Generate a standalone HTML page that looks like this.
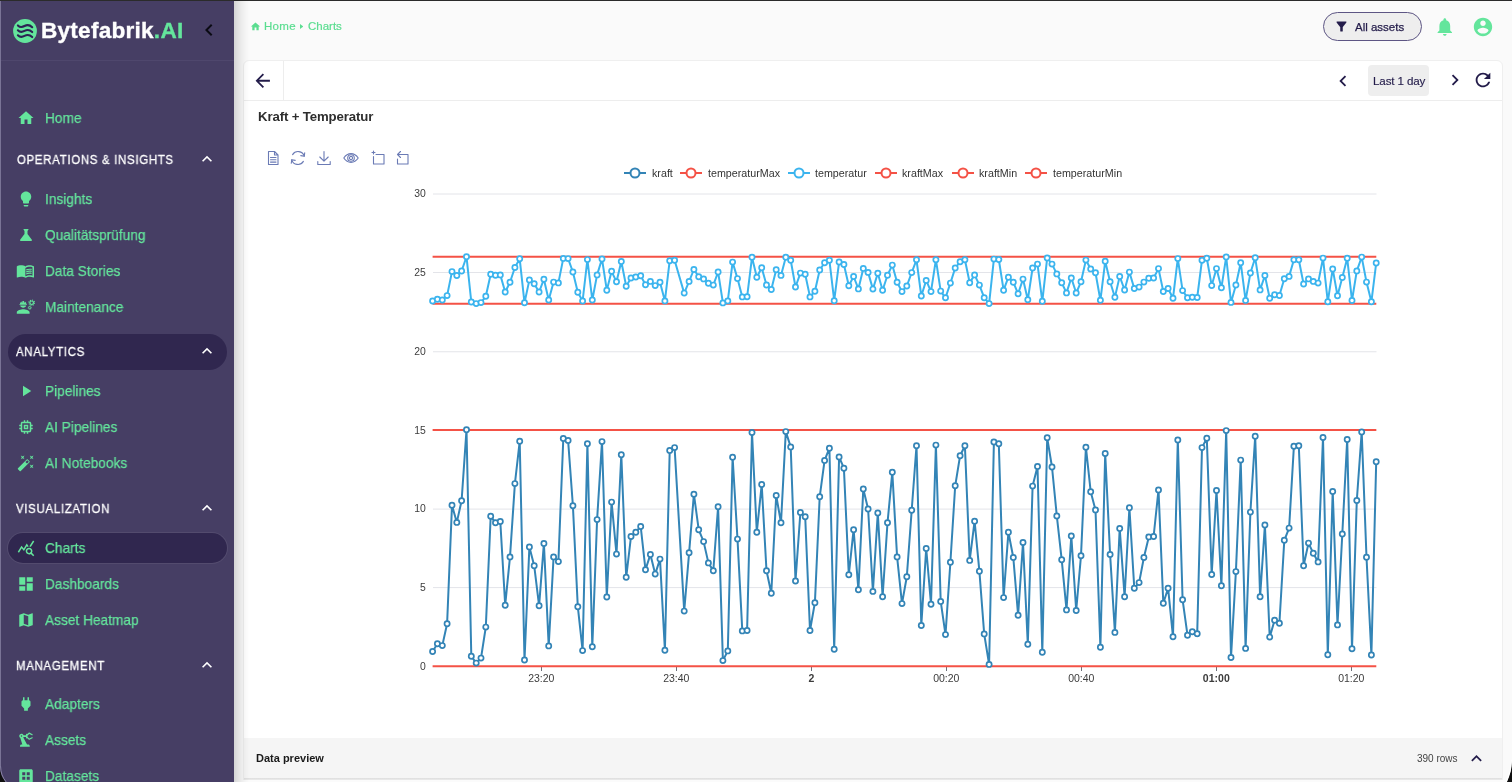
<!DOCTYPE html>
<html lang="en"><head><meta charset="utf-8"><title>Bytefabrik.AI - Charts</title>
<style>
*{box-sizing:border-box;margin:0;padding:0}
html,body{width:1512px;height:782px;overflow:hidden;background:#fafafa;font-family:"Liberation Sans",sans-serif;}
body{position:relative}
.abs{position:absolute}
.bc,#assets span,#last span,#title,#dp .t,#dp .r,.chart,.logo,.ni,.sec{will-change:transform}
svg{display:block}
/* sidebar */
#sb{position:absolute;left:0;top:0;width:234px;height:782px;background:#463e64;overflow:hidden}
#sbline{position:absolute;left:0;top:60px;width:234px;height:1px;background:#4f476d}
.logo{position:absolute;left:41.2px;top:14px;font-weight:bold;font-size:22.6px;line-height:34px;color:#fff;letter-spacing:0.23px;white-space:nowrap;-webkit-text-stroke:0.35px #fff}
.logo b{color:#64e59c;letter-spacing:0.3px;-webkit-text-stroke:0.35px #64e59c}
.ni{position:absolute;left:45.3px;font-size:15px;line-height:20px;color:#64e59c;white-space:nowrap;transform:scaleX(0.913);transform-origin:0 0;-webkit-text-stroke:0.25px #64e59c}
.ic{position:absolute;left:16.5px;width:18px;height:18px;fill:#64e59c}
.sec{position:absolute;left:16.6px;font-size:12.5px;line-height:18px;color:#fff;letter-spacing:0.78px;white-space:nowrap;transform:scaleX(0.913);transform-origin:0 0;-webkit-text-stroke:0.3px #fff}
.chev{position:absolute;left:197px;width:20px;height:20px;fill:#fff}
.pill{position:absolute;left:8px;width:219px;background:#30274f}
/* main */
#shadow{z-index:5;position:absolute;left:234px;top:0;width:15px;height:782px;background:linear-gradient(to right,rgba(0,0,0,.15),rgba(0,0,0,.095) 27%,rgba(0,0,0,.045) 58%,rgba(0,0,0,.014) 85%,rgba(0,0,0,0))}
#topline{position:absolute;left:0;top:0;width:1512px;height:1px;background:#2b2b2b}
.bc{position:absolute;top:18.3px;font-size:11.5px;line-height:16px;color:#5bdd90;white-space:nowrap;-webkit-text-stroke:0.2px #5bdd90}
#assets{position:absolute;left:1323px;top:12px;width:99px;height:29px;border:1px solid #5d5684;border-radius:15px;background:#eeeeee}
#assets span{position:absolute;left:31px;top:6.600px;font-size:11.5px;line-height:15px;color:#231c4a;white-space:nowrap;-webkit-text-stroke:0.25px #231c4a}
#panel{position:absolute;left:243px;top:60px;width:1260px;height:731px;background:#fff;border:1px solid #efefef;border-radius:6px 6px 0 0}
#tbline{position:absolute;left:244px;top:100px;width:1258px;height:1px;background:#ededed}
#vdiv{position:absolute;left:283px;top:61px;width:1px;height:39px;background:#ededed}
#last{position:absolute;left:1368px;top:65px;width:61px;height:31px;border-radius:4px;background:#eeeeee}
#last span{position:absolute;left:5.200px;top:8.400px;font-size:11.6px;line-height:15px;color:#231c4a;white-space:nowrap;letter-spacing:-0.12px;-webkit-text-stroke:0.15px #231c4a}
#title{position:absolute;left:258px;top:108.300px;font-size:13.2px;line-height:18px;font-weight:bold;color:#2e2e2e;white-space:nowrap;letter-spacing:-0.12px}
.chart{position:absolute;left:0;top:0}
.ax{font-family:"Liberation Sans",sans-serif;font-size:11px;fill:#3c3c3c}
.lg{font-family:"Liberation Sans",sans-serif;font-size:11px;fill:#333}
#dp{position:absolute;left:244px;top:738px;width:1258px;height:40px;background:#f5f5f5}
#dpl{position:absolute;left:244px;top:778px;width:1258px;height:2px;background:linear-gradient(#dddddd,#ececec)}
#below{position:absolute;left:234px;top:780px;width:1278px;height:2px;background:#fbfbfb}
#dp .t{position:absolute;left:12px;top:11.800px;font-size:11px;line-height:16px;font-weight:bold;color:#1a1a1a;white-space:nowrap}
#dp .r{position:absolute;left:1173.200px;top:13.700px;font-size:10px;line-height:14px;color:#444;white-space:nowrap}
.tool{position:absolute;top:149px;width:18px;height:18px;fill:none;stroke:#6b7bb5;stroke-width:1.1;stroke-linecap:round;stroke-linejoin:round}
.cornerL{position:absolute;left:0;top:762px;width:20px;height:20px;background:radial-gradient(circle at 100% 0,rgba(0,0,0,0) 19px,#8f8aa6 19.5px,#111 21px)}
.cornerR{position:absolute;left:1492px;top:762px;width:20px;height:20px;background:radial-gradient(circle at 0 0,rgba(0,0,0,0) 19px,#777 19.5px,#111 21px)}
</style></head><body>

<!-- ================= SIDEBAR ================= -->
<div id="sb">
  <svg class="abs" style="left:13.4px;top:18.7px" width="24" height="24" viewBox="0 0 24 24"><circle cx="12" cy="12" r="11.9" fill="#64e59c"/><g fill="none" stroke="#2c2252" stroke-width="2.1" stroke-linecap="round"><path d="M4.900 6.400C7.200 8.700 9.200 8.300 11.500 7S16.600 5.600 19.200 8.200"/><path d="M4.900 11.300C7.200 13.600 9.200 13.200 11.500 11.900S16.600 10.500 19.200 13.100"/><path d="M4.900 16.300C7.200 18.600 9.200 18.200 11.500 16.900S16.600 15.500 19.200 18.100"/></g></svg>
  <div class="logo">Bytefabrik<b>.AI</b></div>
  <svg class="abs" style="left:197px;top:18px" width="24" height="24" viewBox="0 0 24 24" fill="#0b0b14"><path d="M15.410 7.410L14 6l-6 6 6 6 1.410-1.410L10.830 12z"/></svg>
  <div id="sbline"></div>

  <svg class="ic" style="top:109px" viewBox="0 0 24 24"><path d="M10 20v-6h4v6h5v-8h3L12 3 2 12h3v8z"/></svg>
  <div class="ni" style="top:108px">Home</div>

  <div class="sec" style="top:150.6px">OPERATIONS &amp; INSIGHTS</div>
  <svg class="chev" style="top:149px" viewBox="0 0 24 24"><path d="M12 8l-6 6 1.410 1.410L12 10.830l4.590 4.580L18 14z"/></svg>

  <svg class="ic" style="top:190px" viewBox="0 0 24 24"><path d="M9 21c0 .55.45 1 1 1h4c.55 0 1-.45 1-1v-1H9v1zm3-19C8.140 2 5 5.140 5 9c0 2.380 1.190 4.470 3 5.740V17c0 .55.45 1 1 1h6c.55 0 1-.45 1-1v-2.260c1.810-1.270 3-3.360 3-5.740 0-3.860-3.140-7-7-7z"/></svg>
  <div class="ni" style="top:189px">Insights</div>
  <svg class="ic" style="top:226px" viewBox="0 0 24 24"><path d="M19.800 18.400L14 10.670V6.500l1.350-1.690c.26-.33.03-.81-.39-.81H9.040c-.42 0-.65.48-.39.81L10 6.500v4.170L4.200 18.400c-.49.66-.02 1.600.8 1.600h14c.82 0 1.290-.94.800-1.600z"/></svg>
  <div class="ni" style="top:225px">Qualitätsprüfung</div>
  <svg class="ic" style="top:262.100px;left:15.900px;width:18.800px;height:17.700px" viewBox="0 0 24 24" preserveAspectRatio="none"><path d="M21 5c-1.110-.35-2.330-.5-3.500-.5-1.950 0-4.050.4-5.500 1.500-1.450-1.100-3.550-1.500-5.500-1.500S2.450 4.900 1 6v14.650c0 .25.25.5.5.5.1 0 .15-.05.25-.05C3.100 20.450 5.050 20 6.500 20c1.950 0 4.050.4 5.500 1.500 1.350-.85 3.800-1.500 5.500-1.500 1.650 0 3.350.3 4.750 1.050.1.050.15.050.25.050.25 0 .5-.25.5-.5V6c-.6-.45-1.250-.75-2-1zm0 13.500c-1.100-.35-2.300-.5-3.500-.5-1.700 0-4.150.65-5.500 1.500V8c1.350-.85 3.800-1.500 5.500-1.500 1.200 0 2.400.15 3.500.5v11.500z"/><path d="M17.500 10.500c.88 0 1.730.09 2.500.26V9.240c-.79-.15-1.640-.24-2.500-.24-1.700 0-3.240.29-4.500.83v1.660c1.130-.64 2.700-.99 4.500-.99zM13 12.490v1.660c1.130-.64 2.700-.99 4.500-.99.88 0 1.730.09 2.500.26V11.900c-.79-.15-1.640-.24-2.500-.24-1.700 0-3.240.3-4.500.83zM17.500 14.330c-1.700 0-3.240.29-4.500.83v1.660c1.130-.64 2.700-.99 4.500-.99.88 0 1.730.09 2.500.26v-1.520c-.79-.16-1.640-.24-2.500-.24z"/></svg>
  <div class="ni" style="top:261px">Data Stories</div>
  <svg class="ic" style="top:297.700px;left:16.200px;width:19.200px;height:18px" viewBox="0 0 24 24" preserveAspectRatio="none"><path d="M9 15c-2.670 0-8 1.340-8 4v2h16v-2c0-2.660-5.330-4-8-4zM4.740 9h8.530c.27 0 .49-.22.49-.49v-.02c0-.27-.22-.49-.49-.49H13c0-1.480-.81-2.750-2-3.450v.95c0 .28-.22.5-.5.5s-.5-.22-.5-.5V4.140C9.680 4.060 9.350 4 9 4s-.68.060-1 .14V5.500c0 .28-.22.5-.5.5S7 5.780 7 5.500v-.95C5.810 5.250 5 6.520 5 8h-.26c-.27 0-.49.22-.49.49v.03c0 .26.22.48.49.48zM9 13c1.860 0 3.410-1.280 3.860-3H5.140c.45 1.720 2 3 3.860 3z"/><circle cx="19.600" cy="6.300" r="2.300" fill="none" stroke="#64e59c" stroke-width="1.500"/><circle cx="19.600" cy="6.300" r="3.550" fill="none" stroke="#64e59c" stroke-width="1.300" stroke-dasharray="1.394 1.394"/><circle cx="17.200" cy="12.900" r="1.450" fill="none" stroke="#64e59c" stroke-width="1.100"/><circle cx="17.200" cy="12.900" r="2.200" fill="none" stroke="#64e59c" stroke-width="0.800" stroke-dasharray="0.864 0.864"/></svg>
  <div class="ni" style="top:297px">Maintenance</div>

  <div class="pill" style="top:334px;height:36px;border-radius:18px"></div>
  <div class="sec" style="top:342.6px;left:16px">ANALYTICS</div>
  <svg class="chev" style="top:341px" viewBox="0 0 24 24"><path d="M12 8l-6 6 1.410 1.410L12 10.830l4.590 4.580L18 14z"/></svg>

  <svg class="ic" style="top:382px" viewBox="0 0 24 24"><path d="M8 5v14l11-7z"/></svg>
  <div class="ni" style="top:381px">Pipelines</div>
  <svg class="ic" style="top:418px" viewBox="0 0 24 24"><path d="M15 9H9v6h6V9zm-2 4h-2v-2h2v2zm8-2V9h-2V7c0-1.100-.9-2-2-2h-2V3h-2v2h-2V3H9v2H7c-1.100 0-2 .9-2 2v2H3v2h2v2H3v2h2v2c0 1.100.9 2 2 2h2v2h2v-2h2v2h2v-2h2c1.100 0 2-.9 2-2v-2h2v-2h-2v-2h2zm-4 6H7V7h10v10z"/></svg>
  <div class="ni" style="top:417px">AI Pipelines</div>
  <svg class="ic" style="top:454px" viewBox="0 0 24 24"><path d="M7.500 5.600L10 7 8.600 4.500 10 2 7.500 3.400 5 2l1.400 2.500L5 7zm12 9.800L17 14l1.400 2.500L17 19l2.500-1.400L22 19l-1.400-2.500L22 14zM22 2l-2.500 1.400L17 2l1.400 2.500L17 7l2.500-1.400L22 7l-1.400-2.500zm-7.630 5.290c-.39-.39-1.020-.39-1.410 0L1.290 18.960c-.39.39-.39 1.020 0 1.410l2.340 2.340c.39.39 1.020.39 1.410 0L16.700 11.050c.39-.39.39-1.020 0-1.410l-2.330-2.350zm-1.030 5.490l-2.120-2.120 2.440-2.440 2.120 2.120-2.440 2.440z"/></svg>
  <div class="ni" style="top:453px">AI Notebooks</div>

  <div class="sec" style="top:499.6px;left:16px">VISUALIZATION</div>
  <svg class="chev" style="top:498px" viewBox="0 0 24 24"><path d="M12 8l-6 6 1.410 1.410L12 10.830l4.590 4.580L18 14z"/></svg>

  <div class="pill" style="top:533px;height:30px;border-radius:15px;box-shadow:0 0 0 1px rgba(255,255,255,.07)"></div>
  <svg class="ic" style="top:539px" viewBox="0 0 24 24"><path d="M19.880 18.470c.44-.7.7-1.510.7-2.390 0-2.490-2.010-4.500-4.500-4.500s-4.500 2.010-4.500 4.500 2.010 4.500 4.490 4.500c.88 0 1.700-.26 2.390-.7L21.580 23 23 21.580l-3.120-3.110zm-3.800.11c-1.380 0-2.500-1.120-2.500-2.500s1.120-2.500 2.500-2.500 2.500 1.120 2.500 2.500-1.120 2.500-2.500 2.500zm-.36-8.500c-.74.02-1.450.18-2.100.45l-.55-.83-3.800 6.180-3.010-3.520-3.630 5.810L1 17l5-8 3 3.500L13 6l2.720 4.080zm2.590.5c-.64-.28-1.330-.45-2.050-.49L21.380 2 23 3.180l-4.690 7.400z"/></svg>
  <div class="ni" style="top:538px">Charts</div>
  <svg class="ic" style="top:575px" viewBox="0 0 24 24"><path d="M3 13h8V3H3v10zm0 8h8v-6H3v6zm10 0h8V11h-8v10zm0-18v6h8V3h-8z"/></svg>
  <div class="ni" style="top:574px">Dashboards</div>
  <svg class="ic" style="top:611px" viewBox="0 0 24 24"><path d="M20.500 3l-.16.03L15 5.100 9 3 3.360 4.900c-.21.07-.36.25-.36.48V20.500c0 .28.22.5.5.5l.16-.03L9 18.900l6 2.100 5.640-1.900c.21-.07.36-.25.36-.48V3.500c0-.28-.22-.5-.5-.5zM15 19l-6-2.110V5l6 2.110V19z"/></svg>
  <div class="ni" style="top:610px">Asset Heatmap</div>

  <div class="sec" style="top:656.6px;left:16px">MANAGEMENT</div>
  <svg class="chev" style="top:655px" viewBox="0 0 24 24"><path d="M12 8l-6 6 1.410 1.410L12 10.830l4.590 4.580L18 14z"/></svg>

  <svg class="ic" style="top:695px" viewBox="0 0 24 24"><path d="M16.010 7L16 3h-2v4h-4V3H8v4h-.01C7 6.990 6 7.990 6 8.990v5.490L9.500 18v3h5v-3l3.500-3.510v-5.500c0-1-1-2-1.990-1.990z"/></svg>
  <div class="ni" style="top:694px">Adapters</div>
  <svg class="ic" style="top:731px" viewBox="0 0 24 24"><path d="M19.930 8.350l-3.600 1.680L14 7.700V6.300l2.330-2.330 3.600 1.680c.38.18.82.01 1-.36.18-.38.01-.82-.36-1L16.650 2.100c-.38-.18-.83-.1-1.130.2l-1.740 1.740c-.18-.24-.46-.4-.78-.4-.55 0-1 .45-1 1v1H8.820C8.400 4.470 7.300 3.640 6 3.640c-1.660 0-3 1.340-3 3 0 1.100.6 2.050 1.480 2.580L7.080 18H6c-1.100 0-2 .9-2 2v1h13v-1c0-1.100-.9-2-2-2h-1.620L8.410 8.770c.17-.24.31-.49.41-.77H12v1c0 .55.45 1 1 1 .32 0 .6-.16.78-.4l1.740 1.740c.3.3.75.38 1.130.2l3.920-1.830c.38-.18.54-.62.36-1-.18-.37-.62-.54-1-.36zM6 7.640c-.55 0-1-.45-1-1s.45-1 1-1 1 .45 1 1-.45 1-1 1z"/></svg>
  <div class="ni" style="top:730px">Assets</div>
  <svg class="ic" style="top:767px" viewBox="0 0 24 24"><path d="M19 3H5c-1.100 0-2 .9-2 2v14c0 1.100.9 2 2 2h14c1.100 0 2-.9 2-2V5c0-1.100-.9-2-2-2zm-8 14H7v-4h4v4zm0-6H7V7h4v4zm6 6h-4v-4h4v4zm0-6h-4V7h4v4z"/></svg>
  <div class="ni" style="top:766px">Datasets</div>
</div>

<!-- ================= MAIN ================= -->
<div id="shadow"></div>

<svg class="abs" style="left:249.500px;top:20.600px" width="11" height="11" viewBox="0 0 24 24" fill="#5bdd90"><path d="M10 20v-6h4v6h5v-8h3L12 3 2 12h3v8z"/></svg>
<div class="bc" style="left:264.300px;letter-spacing:0.3px">Home</div>
<svg class="abs" style="left:300px;top:23.600px" width="3.200" height="5" viewBox="0 0 3.200 5" fill="#5bdd90"><path d="M0 0L3.200 2.500 0 5z"/></svg>
<div class="bc" style="left:307.600px">Charts</div>

<div id="assets"><svg class="abs" style="left:10px;top:6px" width="15" height="15" viewBox="0 0 24 24" fill="#231c4a"><path d="M4.250 5.610C6.270 8.200 10 13 10 13v6c0 .55.45 1 1 1h2c.55 0 1-.45 1-1v-6s3.720-4.800 5.740-7.390c.51-.66.04-1.610-.79-1.610H5.040c-.83 0-1.300.95-.79 1.610z"/></svg><span>All assets</span></div>
<svg class="abs" style="left:1434.300px;top:16.100px" width="21.600" height="21.600" viewBox="0 0 24 24" fill="#64e59c"><path d="M12 22c1.100 0 2-.9 2-2h-4c0 1.100.89 2 2 2zm6-6v-5c0-3.070-1.640-5.640-4.500-6.320V4c0-.83-.67-1.500-1.500-1.500s-1.500.67-1.500 1.500v.68C7.630 5.360 6 7.920 6 11v5l-2 2v1h16v-1l-2-2z"/></svg>
<svg class="abs" style="left:1472px;top:15.500px" width="22" height="22" viewBox="0 0 24 24" fill="#64e59c"><path d="M12 2C6.480 2 2 6.480 2 12s4.480 10 10 10 10-4.480 10-10S17.520 2 12 2zm0 3c1.660 0 3 1.340 3 3s-1.340 3-3 3-3-1.340-3-3 1.340-3 3-3zm0 14.200c-2.500 0-4.710-1.280-6-3.220.03-1.990 4-3.080 6-3.080 1.990 0 5.970 1.090 6 3.080-1.290 1.940-3.500 3.220-6 3.220z"/></svg>

<div id="panel"></div>
<div id="tbline"></div>
<div id="vdiv"></div>
<svg class="abs" style="left:252.200px;top:69.900px" width="21.500" height="21.500" viewBox="0 0 24 24" fill="#231c4a"><path d="M20 11H7.830l5.590-5.590L12 4l-8 8 8 8 1.410-1.410L7.830 13H20v-2z"/></svg>
<svg class="abs" style="left:1332.300px;top:69.500px" width="22" height="22" viewBox="0 0 24 24" fill="#231c4a"><path d="M15.410 7.410L14 6l-6 6 6 6 1.410-1.410L10.830 12z"/></svg>
<div id="last"><span>Last 1 day</span></div>
<svg class="abs" style="left:1443.600px;top:69.400px" width="22" height="22" viewBox="0 0 24 24" fill="#231c4a"><path d="M10 6L8.590 7.410 13.170 12l-4.580 4.590L10 18l6-6z"/></svg>
<svg class="abs" style="left:1472.400px;top:69.400px" width="22" height="22" viewBox="0 0 24 24" fill="#231c4a"><path d="M17.650 6.350C16.200 4.900 14.210 4 12 4c-4.420 0-7.990 3.580-7.990 8s3.570 8 7.990 8c3.730 0 6.840-2.550 7.730-6h-2.080c-.82 2.330-3.040 4-5.650 4-3.310 0-6-2.690-6-6s2.690-6 6-6c1.660 0 3.140.69 4.220 1.780L13 11h7V4l-2.350 2.350z"/></svg>

<div id="title">Kraft + Temperatur</div>

<!-- echarts toolbox -->
<svg class="tool" style="left:264px" viewBox="0 0 18 18"><path d="M4.500 2.500h6l3.500 3.500v9.500h-9.500zM10.500 2.500v3.500h3.500M6.500 8.500h5.500M6.500 10.800h5.500M6.500 13.100h5.500"/></svg>
<svg class="tool" style="left:289px" viewBox="0 0 18 18"><path d="M15.200 7.200A6.400 6.400 0 0 0 3.600 5.600M2.800 10.800a6.400 6.400 0 0 0 11.600 1.600"/><path d="M15.700 3.700l-.4 3.600-3.500-.7M2.300 14.300l.4-3.600 3.500.7"/></svg>
<svg class="tool" style="left:315px" viewBox="0 0 18 18"><path d="M9 2.500v9.500M4.800 8l4.200 4.200L13.200 8M2.800 12.500v3h12.400v-3"/></svg>
<svg class="tool" style="left:342px" viewBox="0 0 18 18"><path d="M1.800 9c2-3 4.400-4.400 7.200-4.400s5.200 1.400 7.200 4.400c-2 3-4.400 4.400-7.200 4.400S3.800 12 1.800 9z"/><circle cx="9" cy="9" r="3.300"/><circle cx="9" cy="9" r="1.600"/></svg>
<svg class="tool" style="left:369px" viewBox="0 0 18 18"><path d="M4.500 2v3M3 3.500h3M4.500 7.500v7.500h10.500v-9.500h-8"/></svg>
<svg class="tool" style="left:393.400px" viewBox="0 0 18 18"><path d="M7.500 2.500L4.500 5.500l3 3M4.500 5.500h10.500v9.500h-10.500v-5"/></svg>

<svg class="chart" width="1512" height="782" viewBox="0 0 1512 782">
<line x1="433" x2="1376.5" y1="194.0" y2="194.0" stroke="#e3e4e9" stroke-width="1"/>
<line x1="433" x2="1376.5" y1="272.5" y2="272.5" stroke="#e3e4e9" stroke-width="1"/>
<line x1="433" x2="1376.5" y1="351.75" y2="351.75" stroke="#e3e4e9" stroke-width="1"/>
<line x1="433" x2="1376.5" y1="430.2" y2="430.2" stroke="#e3e4e9" stroke-width="1"/>
<line x1="433" x2="1376.5" y1="509.1" y2="509.1" stroke="#e3e4e9" stroke-width="1"/>
<line x1="433" x2="1376.5" y1="587.6" y2="587.6" stroke="#e3e4e9" stroke-width="1"/>
<text transform="translate(425.7,197.0) scale(0.945,1)" text-anchor="end" class="ax">30</text>
<text transform="translate(425.7,275.5) scale(0.945,1)" text-anchor="end" class="ax">25</text>
<text transform="translate(425.7,354.8) scale(0.945,1)" text-anchor="end" class="ax">20</text>
<text transform="translate(425.7,433.5) scale(0.945,1)" text-anchor="end" class="ax">15</text>
<text transform="translate(425.7,512.4) scale(0.945,1)" text-anchor="end" class="ax">10</text>
<text transform="translate(425.7,590.6) scale(0.945,1)" text-anchor="end" class="ax">5</text>
<text transform="translate(425.7,670.0) scale(0.945,1)" text-anchor="end" class="ax">0</text>
<line x1="541.5" x2="541.5" y1="666" y2="671" stroke="#6e7079" stroke-width="1"/>
<text transform="translate(541.3,682.1) scale(0.955,1)" text-anchor="middle" class="ax">23:20</text>
<line x1="676.5" x2="676.5" y1="666" y2="671" stroke="#6e7079" stroke-width="1"/>
<text transform="translate(676.3,682.1) scale(0.955,1)" text-anchor="middle" class="ax">23:40</text>
<line x1="811.5" x2="811.5" y1="666" y2="671" stroke="#6e7079" stroke-width="1"/>
<text transform="translate(811.3,682.1) scale(0.955,1)" text-anchor="middle" class="ax" font-weight="bold">2</text>
<line x1="946.5" x2="946.5" y1="666" y2="671" stroke="#6e7079" stroke-width="1"/>
<text transform="translate(946.3,682.1) scale(0.955,1)" text-anchor="middle" class="ax">00:20</text>
<line x1="1081.5" x2="1081.5" y1="666" y2="671" stroke="#6e7079" stroke-width="1"/>
<text transform="translate(1081.3,682.1) scale(0.955,1)" text-anchor="middle" class="ax">00:40</text>
<line x1="1216.5" x2="1216.5" y1="666" y2="671" stroke="#6e7079" stroke-width="1"/>
<text transform="translate(1216.3,682.1) scale(0.955,1)" text-anchor="middle" class="ax" font-weight="bold">01:00</text>
<line x1="1351.5" x2="1351.5" y1="666" y2="671" stroke="#6e7079" stroke-width="1"/>
<text transform="translate(1351.3,682.1) scale(0.955,1)" text-anchor="middle" class="ax">01:20</text>
<line x1="432.6" x2="1376.3" y1="256.8" y2="256.8" stroke="#f45246" stroke-width="2"/>
<line x1="432.6" x2="1376.3" y1="303.7" y2="303.7" stroke="#f45246" stroke-width="2"/>
<line x1="432.6" x2="1376.3" y1="429.9" y2="429.9" stroke="#f45246" stroke-width="2"/>
<line x1="432.6" x2="1376.3" y1="666.2" y2="666.2" stroke="#f45246" stroke-width="2"/>
<polyline points="432.6,301.0 437.4,299.3 442.3,300.0 447.1,295.6 452.0,271.6 456.8,275.5 461.6,271.0 466.5,256.7 471.3,302.0 476.2,303.6 481.0,302.6 485.8,296.3 490.7,274.2 495.5,275.3 500.3,274.9 505.2,292.0 510.0,282.2 514.9,267.5 519.7,258.8 524.5,302.8 529.4,279.9 534.2,283.7 539.1,292.0 543.9,279.2 548.7,300.0 553.6,282.1 558.4,282.9 563.3,258.4 568.1,258.6 572.9,272.0 577.8,292.2 582.6,301.0 587.4,259.6 592.3,300.0 597.1,274.9 602.0,258.9 606.8,290.2 611.6,271.3 616.5,281.8 621.3,261.5 626.2,286.2 631.0,278.0 635.8,277.0 640.7,275.8 645.5,284.8 650.4,281.4 655.2,285.6 660.0,282.3 664.9,300.9 669.7,260.7 674.6,260.2 684.2,293.1 689.1,281.4 693.9,269.5 698.7,276.7 703.6,278.9 708.4,283.3 713.3,285.1 718.1,272.0 722.9,302.9 727.8,300.9 732.6,262.1 737.5,278.6 742.3,296.9 747.1,296.8 752.0,257.3 756.8,277.3 761.7,267.7 766.5,285.0 771.3,289.5 776.2,269.8 781.0,275.4 785.8,257.2 790.7,260.2 795.5,287.0 800.4,273.1 805.2,274.2 810.0,296.9 814.9,291.2 819.7,270.0 824.6,262.7 829.4,260.3 834.2,300.7 839.1,262.0 843.9,264.5 848.8,285.8 853.6,276.5 858.4,288.9 863.3,268.4 868.1,272.4 872.9,289.1 877.8,273.3 882.6,290.2 887.5,275.3 892.3,265.1 897.1,282.2 902.0,291.6 906.8,286.0 911.7,272.6 916.5,259.8 921.3,296.0 926.2,280.4 931.0,291.6 935.9,259.7 940.7,291.1 945.5,297.8 950.4,283.1 955.2,268.0 960.1,261.8 964.9,259.8 969.7,282.7 974.6,274.9 979.4,285.1 984.2,297.7 989.1,303.6 993.9,259.1 998.8,259.5 1003.6,290.2 1008.4,277.2 1013.3,282.2 1018.1,293.8 1023.0,279.1 1027.8,299.8 1032.6,268.0 1037.5,264.1 1042.3,301.3 1047.2,257.9 1052.0,264.1 1056.8,273.9 1061.7,282.7 1066.5,292.9 1071.3,277.9 1076.2,293.0 1081.0,281.8 1085.9,260.1 1090.7,268.9 1095.5,272.8 1100.4,300.3 1105.2,261.3 1110.1,281.8 1114.9,297.3 1119.7,276.4 1124.6,290.0 1129.4,272.1 1134.3,288.5 1139.1,287.1 1143.9,282.1 1148.8,278.2 1153.6,278.0 1158.5,268.6 1163.3,291.5 1168.1,288.5 1173.0,298.2 1177.8,258.6 1182.6,290.6 1187.5,297.8 1192.3,297.3 1197.2,297.5 1202.0,260.2 1206.8,258.2 1211.7,285.6 1216.5,268.6 1221.4,287.8 1226.2,256.9 1231.0,302.4 1235.9,285.0 1240.7,262.7 1245.6,300.4 1250.4,273.0 1255.2,257.8 1260.1,289.9 1264.9,275.5 1269.7,298.2 1274.6,294.8 1279.4,295.5 1284.3,278.7 1289.1,276.4 1293.9,259.8 1298.8,259.8 1303.6,284.0 1308.5,278.9 1313.3,281.4 1318.1,283.1 1323.0,258.1 1327.8,301.8 1332.7,268.9 1337.5,295.8 1342.3,277.5 1347.2,258.3 1352.0,300.5 1356.8,270.9 1361.7,257.1 1366.5,282.1 1371.4,301.8 1376.2,263.0" fill="none" stroke="#3bb4ee" stroke-width="2" stroke-linejoin="bevel"/>
<g fill="#fff" stroke="#3bb4ee" stroke-width="1.7"><circle cx="432.6" cy="301.0" r="2.6"/><circle cx="437.4" cy="299.3" r="2.6"/><circle cx="442.3" cy="300.0" r="2.6"/><circle cx="447.1" cy="295.6" r="2.6"/><circle cx="452.0" cy="271.6" r="2.6"/><circle cx="456.8" cy="275.5" r="2.6"/><circle cx="461.6" cy="271.0" r="2.6"/><circle cx="466.5" cy="256.7" r="2.6"/><circle cx="471.3" cy="302.0" r="2.6"/><circle cx="476.2" cy="303.6" r="2.6"/><circle cx="481.0" cy="302.6" r="2.6"/><circle cx="485.8" cy="296.3" r="2.6"/><circle cx="490.7" cy="274.2" r="2.6"/><circle cx="495.5" cy="275.3" r="2.6"/><circle cx="500.3" cy="274.9" r="2.6"/><circle cx="505.2" cy="292.0" r="2.6"/><circle cx="510.0" cy="282.2" r="2.6"/><circle cx="514.9" cy="267.5" r="2.6"/><circle cx="519.7" cy="258.8" r="2.6"/><circle cx="524.5" cy="302.8" r="2.6"/><circle cx="529.4" cy="279.9" r="2.6"/><circle cx="534.2" cy="283.7" r="2.6"/><circle cx="539.1" cy="292.0" r="2.6"/><circle cx="543.9" cy="279.2" r="2.6"/><circle cx="548.7" cy="300.0" r="2.6"/><circle cx="553.6" cy="282.1" r="2.6"/><circle cx="558.4" cy="282.9" r="2.6"/><circle cx="563.3" cy="258.4" r="2.6"/><circle cx="568.1" cy="258.6" r="2.6"/><circle cx="572.9" cy="272.0" r="2.6"/><circle cx="577.8" cy="292.2" r="2.6"/><circle cx="582.6" cy="301.0" r="2.6"/><circle cx="587.4" cy="259.6" r="2.6"/><circle cx="592.3" cy="300.0" r="2.6"/><circle cx="597.1" cy="274.9" r="2.6"/><circle cx="602.0" cy="258.9" r="2.6"/><circle cx="606.8" cy="290.2" r="2.6"/><circle cx="611.6" cy="271.3" r="2.6"/><circle cx="616.5" cy="281.8" r="2.6"/><circle cx="621.3" cy="261.5" r="2.6"/><circle cx="626.2" cy="286.2" r="2.6"/><circle cx="631.0" cy="278.0" r="2.6"/><circle cx="635.8" cy="277.0" r="2.6"/><circle cx="640.7" cy="275.8" r="2.6"/><circle cx="645.5" cy="284.8" r="2.6"/><circle cx="650.4" cy="281.4" r="2.6"/><circle cx="655.2" cy="285.6" r="2.6"/><circle cx="660.0" cy="282.3" r="2.6"/><circle cx="664.9" cy="300.9" r="2.6"/><circle cx="669.7" cy="260.7" r="2.6"/><circle cx="674.6" cy="260.2" r="2.6"/><circle cx="684.2" cy="293.1" r="2.6"/><circle cx="689.1" cy="281.4" r="2.6"/><circle cx="693.9" cy="269.5" r="2.6"/><circle cx="698.7" cy="276.7" r="2.6"/><circle cx="703.6" cy="278.9" r="2.6"/><circle cx="708.4" cy="283.3" r="2.6"/><circle cx="713.3" cy="285.1" r="2.6"/><circle cx="718.1" cy="272.0" r="2.6"/><circle cx="722.9" cy="302.9" r="2.6"/><circle cx="727.8" cy="300.9" r="2.6"/><circle cx="732.6" cy="262.1" r="2.6"/><circle cx="737.5" cy="278.6" r="2.6"/><circle cx="742.3" cy="296.9" r="2.6"/><circle cx="747.1" cy="296.8" r="2.6"/><circle cx="752.0" cy="257.3" r="2.6"/><circle cx="756.8" cy="277.3" r="2.6"/><circle cx="761.7" cy="267.7" r="2.6"/><circle cx="766.5" cy="285.0" r="2.6"/><circle cx="771.3" cy="289.5" r="2.6"/><circle cx="776.2" cy="269.8" r="2.6"/><circle cx="781.0" cy="275.4" r="2.6"/><circle cx="785.8" cy="257.2" r="2.6"/><circle cx="790.7" cy="260.2" r="2.6"/><circle cx="795.5" cy="287.0" r="2.6"/><circle cx="800.4" cy="273.1" r="2.6"/><circle cx="805.2" cy="274.2" r="2.6"/><circle cx="810.0" cy="296.9" r="2.6"/><circle cx="814.9" cy="291.2" r="2.6"/><circle cx="819.7" cy="270.0" r="2.6"/><circle cx="824.6" cy="262.7" r="2.6"/><circle cx="829.4" cy="260.3" r="2.6"/><circle cx="834.2" cy="300.7" r="2.6"/><circle cx="839.1" cy="262.0" r="2.6"/><circle cx="843.9" cy="264.5" r="2.6"/><circle cx="848.8" cy="285.8" r="2.6"/><circle cx="853.6" cy="276.5" r="2.6"/><circle cx="858.4" cy="288.9" r="2.6"/><circle cx="863.3" cy="268.4" r="2.6"/><circle cx="868.1" cy="272.4" r="2.6"/><circle cx="872.9" cy="289.1" r="2.6"/><circle cx="877.8" cy="273.3" r="2.6"/><circle cx="882.6" cy="290.2" r="2.6"/><circle cx="887.5" cy="275.3" r="2.6"/><circle cx="892.3" cy="265.1" r="2.6"/><circle cx="897.1" cy="282.2" r="2.6"/><circle cx="902.0" cy="291.6" r="2.6"/><circle cx="906.8" cy="286.0" r="2.6"/><circle cx="911.7" cy="272.6" r="2.6"/><circle cx="916.5" cy="259.8" r="2.6"/><circle cx="921.3" cy="296.0" r="2.6"/><circle cx="926.2" cy="280.4" r="2.6"/><circle cx="931.0" cy="291.6" r="2.6"/><circle cx="935.9" cy="259.7" r="2.6"/><circle cx="940.7" cy="291.1" r="2.6"/><circle cx="945.5" cy="297.8" r="2.6"/><circle cx="950.4" cy="283.1" r="2.6"/><circle cx="955.2" cy="268.0" r="2.6"/><circle cx="960.1" cy="261.8" r="2.6"/><circle cx="964.9" cy="259.8" r="2.6"/><circle cx="969.7" cy="282.7" r="2.6"/><circle cx="974.6" cy="274.9" r="2.6"/><circle cx="979.4" cy="285.1" r="2.6"/><circle cx="984.2" cy="297.7" r="2.6"/><circle cx="989.1" cy="303.6" r="2.6"/><circle cx="993.9" cy="259.1" r="2.6"/><circle cx="998.8" cy="259.5" r="2.6"/><circle cx="1003.6" cy="290.2" r="2.6"/><circle cx="1008.4" cy="277.2" r="2.6"/><circle cx="1013.3" cy="282.2" r="2.6"/><circle cx="1018.1" cy="293.8" r="2.6"/><circle cx="1023.0" cy="279.1" r="2.6"/><circle cx="1027.8" cy="299.8" r="2.6"/><circle cx="1032.6" cy="268.0" r="2.6"/><circle cx="1037.5" cy="264.1" r="2.6"/><circle cx="1042.3" cy="301.3" r="2.6"/><circle cx="1047.2" cy="257.9" r="2.6"/><circle cx="1052.0" cy="264.1" r="2.6"/><circle cx="1056.8" cy="273.9" r="2.6"/><circle cx="1061.7" cy="282.7" r="2.6"/><circle cx="1066.5" cy="292.9" r="2.6"/><circle cx="1071.3" cy="277.9" r="2.6"/><circle cx="1076.2" cy="293.0" r="2.6"/><circle cx="1081.0" cy="281.8" r="2.6"/><circle cx="1085.9" cy="260.1" r="2.6"/><circle cx="1090.7" cy="268.9" r="2.6"/><circle cx="1095.5" cy="272.8" r="2.6"/><circle cx="1100.4" cy="300.3" r="2.6"/><circle cx="1105.2" cy="261.3" r="2.6"/><circle cx="1110.1" cy="281.8" r="2.6"/><circle cx="1114.9" cy="297.3" r="2.6"/><circle cx="1119.7" cy="276.4" r="2.6"/><circle cx="1124.6" cy="290.0" r="2.6"/><circle cx="1129.4" cy="272.1" r="2.6"/><circle cx="1134.3" cy="288.5" r="2.6"/><circle cx="1139.1" cy="287.1" r="2.6"/><circle cx="1143.9" cy="282.1" r="2.6"/><circle cx="1148.8" cy="278.2" r="2.6"/><circle cx="1153.6" cy="278.0" r="2.6"/><circle cx="1158.5" cy="268.6" r="2.6"/><circle cx="1163.3" cy="291.5" r="2.6"/><circle cx="1168.1" cy="288.5" r="2.6"/><circle cx="1173.0" cy="298.2" r="2.6"/><circle cx="1177.8" cy="258.6" r="2.6"/><circle cx="1182.6" cy="290.6" r="2.6"/><circle cx="1187.5" cy="297.8" r="2.6"/><circle cx="1192.3" cy="297.3" r="2.6"/><circle cx="1197.2" cy="297.5" r="2.6"/><circle cx="1202.0" cy="260.2" r="2.6"/><circle cx="1206.8" cy="258.2" r="2.6"/><circle cx="1211.7" cy="285.6" r="2.6"/><circle cx="1216.5" cy="268.6" r="2.6"/><circle cx="1221.4" cy="287.8" r="2.6"/><circle cx="1226.2" cy="256.9" r="2.6"/><circle cx="1231.0" cy="302.4" r="2.6"/><circle cx="1235.9" cy="285.0" r="2.6"/><circle cx="1240.7" cy="262.7" r="2.6"/><circle cx="1245.6" cy="300.4" r="2.6"/><circle cx="1250.4" cy="273.0" r="2.6"/><circle cx="1255.2" cy="257.8" r="2.6"/><circle cx="1260.1" cy="289.9" r="2.6"/><circle cx="1264.9" cy="275.5" r="2.6"/><circle cx="1269.7" cy="298.2" r="2.6"/><circle cx="1274.6" cy="294.8" r="2.6"/><circle cx="1279.4" cy="295.5" r="2.6"/><circle cx="1284.3" cy="278.7" r="2.6"/><circle cx="1289.1" cy="276.4" r="2.6"/><circle cx="1293.9" cy="259.8" r="2.6"/><circle cx="1298.8" cy="259.8" r="2.6"/><circle cx="1303.6" cy="284.0" r="2.6"/><circle cx="1308.5" cy="278.9" r="2.6"/><circle cx="1313.3" cy="281.4" r="2.6"/><circle cx="1318.1" cy="283.1" r="2.6"/><circle cx="1323.0" cy="258.1" r="2.6"/><circle cx="1327.8" cy="301.8" r="2.6"/><circle cx="1332.7" cy="268.9" r="2.6"/><circle cx="1337.5" cy="295.8" r="2.6"/><circle cx="1342.3" cy="277.5" r="2.6"/><circle cx="1347.2" cy="258.3" r="2.6"/><circle cx="1352.0" cy="300.5" r="2.6"/><circle cx="1356.8" cy="270.9" r="2.6"/><circle cx="1361.7" cy="257.1" r="2.6"/><circle cx="1366.5" cy="282.1" r="2.6"/><circle cx="1371.4" cy="301.8" r="2.6"/><circle cx="1376.2" cy="263.0" r="2.6"/></g>
<polyline points="432.6,651.5 437.4,643.7 442.3,645.6 447.1,623.7 452.0,505.2 456.8,522.4 461.6,500.8 466.5,429.7 471.3,656.2 476.2,663.1 481.0,658.1 485.8,627.1 490.7,516.2 495.5,522.8 500.3,521.5 505.2,605.2 510.0,556.9 514.9,483.6 519.7,441.3 524.5,660.0 529.4,546.9 534.2,565.7 539.1,605.8 543.9,543.4 548.7,645.9 553.6,556.9 558.4,561.6 563.3,438.5 568.1,440.4 572.9,505.8 577.8,606.7 582.6,650.6 587.4,443.8 592.3,646.8 597.1,519.6 602.0,441.6 606.8,597.0 611.6,502.1 616.5,554.1 621.3,454.8 626.2,577.3 631.0,536.5 635.8,532.2 640.7,526.5 645.5,569.8 650.4,554.4 655.2,574.1 660.0,559.1 664.9,650.3 669.7,450.4 674.6,447.6 684.2,611.1 689.1,552.8 693.9,494.2 698.7,529.7 703.6,541.6 708.4,562.9 713.3,570.7 718.1,506.8 722.9,660.6 727.8,650.9 732.6,457.3 737.5,539.1 742.3,630.9 747.1,630.5 752.0,432.5 756.8,532.2 761.7,484.5 766.5,570.7 771.3,593.3 776.2,495.5 781.0,522.8 785.8,431.6 790.7,446.9 795.5,581.0 800.4,512.4 805.2,516.8 810.0,630.5 814.9,602.7 819.7,496.8 824.6,460.4 829.4,448.2 834.2,649.3 839.1,457.0 843.9,468.2 848.8,574.8 853.6,529.7 858.4,589.8 863.3,488.9 868.1,509.0 872.9,591.4 877.8,513.0 882.6,596.7 887.5,522.8 892.3,472.3 897.1,556.9 902.0,603.6 906.8,576.7 911.7,510.2 916.5,445.7 921.3,625.5 926.2,548.5 931.0,604.2 935.9,445.1 940.7,601.4 945.5,634.6 950.4,562.2 955.2,485.8 960.1,455.7 964.9,445.7 969.7,560.4 974.6,521.2 979.4,571.3 984.2,634.0 989.1,664.4 993.9,441.9 998.8,443.8 1003.6,597.6 1008.4,532.2 1013.3,557.5 1018.1,615.2 1023.0,542.5 1027.8,644.3 1032.6,486.1 1037.5,466.4 1042.3,652.2 1047.2,437.8 1052.0,467.0 1056.8,515.9 1061.7,559.7 1066.5,609.9 1071.3,535.9 1076.2,610.5 1081.0,555.7 1085.9,447.2 1090.7,491.7 1095.5,509.9 1100.4,647.2 1105.2,453.5 1110.1,554.4 1114.9,632.4 1119.7,528.4 1124.6,596.7 1129.4,507.7 1134.3,588.2 1139.1,582.6 1143.9,557.5 1148.8,536.9 1153.6,536.5 1158.5,489.9 1163.3,603.3 1168.1,588.2 1173.0,636.8 1177.8,440.0 1182.6,599.8 1187.5,635.2 1192.3,631.8 1197.2,633.7 1202.0,447.6 1206.8,438.2 1211.7,574.5 1216.5,490.5 1221.4,585.7 1226.2,430.6 1231.0,657.5 1235.9,571.6 1240.7,460.1 1245.6,648.4 1250.4,512.1 1255.2,436.3 1260.1,596.7 1264.9,525.0 1269.7,637.1 1274.6,620.2 1279.4,623.3 1284.3,540.3 1289.1,528.1 1293.9,446.3 1298.8,445.7 1303.6,565.7 1308.5,543.1 1313.3,553.2 1318.1,561.9 1323.0,437.5 1327.8,654.7 1332.7,491.4 1337.5,624.9 1342.3,534.0 1347.2,439.4 1352.0,648.7 1356.8,500.5 1361.7,431.9 1366.5,557.2 1371.4,655.0 1376.2,461.7" fill="none" stroke="#3384b6" stroke-width="2" stroke-linejoin="bevel"/>
<g fill="#fff" stroke="#3384b6" stroke-width="1.7"><circle cx="432.6" cy="651.5" r="2.6"/><circle cx="437.4" cy="643.7" r="2.6"/><circle cx="442.3" cy="645.6" r="2.6"/><circle cx="447.1" cy="623.7" r="2.6"/><circle cx="452.0" cy="505.2" r="2.6"/><circle cx="456.8" cy="522.4" r="2.6"/><circle cx="461.6" cy="500.8" r="2.6"/><circle cx="466.5" cy="429.7" r="2.6"/><circle cx="471.3" cy="656.2" r="2.6"/><circle cx="476.2" cy="663.1" r="2.6"/><circle cx="481.0" cy="658.1" r="2.6"/><circle cx="485.8" cy="627.1" r="2.6"/><circle cx="490.7" cy="516.2" r="2.6"/><circle cx="495.5" cy="522.8" r="2.6"/><circle cx="500.3" cy="521.5" r="2.6"/><circle cx="505.2" cy="605.2" r="2.6"/><circle cx="510.0" cy="556.9" r="2.6"/><circle cx="514.9" cy="483.6" r="2.6"/><circle cx="519.7" cy="441.3" r="2.6"/><circle cx="524.5" cy="660.0" r="2.6"/><circle cx="529.4" cy="546.9" r="2.6"/><circle cx="534.2" cy="565.7" r="2.6"/><circle cx="539.1" cy="605.8" r="2.6"/><circle cx="543.9" cy="543.4" r="2.6"/><circle cx="548.7" cy="645.9" r="2.6"/><circle cx="553.6" cy="556.9" r="2.6"/><circle cx="558.4" cy="561.6" r="2.6"/><circle cx="563.3" cy="438.5" r="2.6"/><circle cx="568.1" cy="440.4" r="2.6"/><circle cx="572.9" cy="505.8" r="2.6"/><circle cx="577.8" cy="606.7" r="2.6"/><circle cx="582.6" cy="650.6" r="2.6"/><circle cx="587.4" cy="443.8" r="2.6"/><circle cx="592.3" cy="646.8" r="2.6"/><circle cx="597.1" cy="519.6" r="2.6"/><circle cx="602.0" cy="441.6" r="2.6"/><circle cx="606.8" cy="597.0" r="2.6"/><circle cx="611.6" cy="502.1" r="2.6"/><circle cx="616.5" cy="554.1" r="2.6"/><circle cx="621.3" cy="454.8" r="2.6"/><circle cx="626.2" cy="577.3" r="2.6"/><circle cx="631.0" cy="536.5" r="2.6"/><circle cx="635.8" cy="532.2" r="2.6"/><circle cx="640.7" cy="526.5" r="2.6"/><circle cx="645.5" cy="569.8" r="2.6"/><circle cx="650.4" cy="554.4" r="2.6"/><circle cx="655.2" cy="574.1" r="2.6"/><circle cx="660.0" cy="559.1" r="2.6"/><circle cx="664.9" cy="650.3" r="2.6"/><circle cx="669.7" cy="450.4" r="2.6"/><circle cx="674.6" cy="447.6" r="2.6"/><circle cx="684.2" cy="611.1" r="2.6"/><circle cx="689.1" cy="552.8" r="2.6"/><circle cx="693.9" cy="494.2" r="2.6"/><circle cx="698.7" cy="529.7" r="2.6"/><circle cx="703.6" cy="541.6" r="2.6"/><circle cx="708.4" cy="562.9" r="2.6"/><circle cx="713.3" cy="570.7" r="2.6"/><circle cx="718.1" cy="506.8" r="2.6"/><circle cx="722.9" cy="660.6" r="2.6"/><circle cx="727.8" cy="650.9" r="2.6"/><circle cx="732.6" cy="457.3" r="2.6"/><circle cx="737.5" cy="539.1" r="2.6"/><circle cx="742.3" cy="630.9" r="2.6"/><circle cx="747.1" cy="630.5" r="2.6"/><circle cx="752.0" cy="432.5" r="2.6"/><circle cx="756.8" cy="532.2" r="2.6"/><circle cx="761.7" cy="484.5" r="2.6"/><circle cx="766.5" cy="570.7" r="2.6"/><circle cx="771.3" cy="593.3" r="2.6"/><circle cx="776.2" cy="495.5" r="2.6"/><circle cx="781.0" cy="522.8" r="2.6"/><circle cx="785.8" cy="431.6" r="2.6"/><circle cx="790.7" cy="446.9" r="2.6"/><circle cx="795.5" cy="581.0" r="2.6"/><circle cx="800.4" cy="512.4" r="2.6"/><circle cx="805.2" cy="516.8" r="2.6"/><circle cx="810.0" cy="630.5" r="2.6"/><circle cx="814.9" cy="602.7" r="2.6"/><circle cx="819.7" cy="496.8" r="2.6"/><circle cx="824.6" cy="460.4" r="2.6"/><circle cx="829.4" cy="448.2" r="2.6"/><circle cx="834.2" cy="649.3" r="2.6"/><circle cx="839.1" cy="457.0" r="2.6"/><circle cx="843.9" cy="468.2" r="2.6"/><circle cx="848.8" cy="574.8" r="2.6"/><circle cx="853.6" cy="529.7" r="2.6"/><circle cx="858.4" cy="589.8" r="2.6"/><circle cx="863.3" cy="488.9" r="2.6"/><circle cx="868.1" cy="509.0" r="2.6"/><circle cx="872.9" cy="591.4" r="2.6"/><circle cx="877.8" cy="513.0" r="2.6"/><circle cx="882.6" cy="596.7" r="2.6"/><circle cx="887.5" cy="522.8" r="2.6"/><circle cx="892.3" cy="472.3" r="2.6"/><circle cx="897.1" cy="556.9" r="2.6"/><circle cx="902.0" cy="603.6" r="2.6"/><circle cx="906.8" cy="576.7" r="2.6"/><circle cx="911.7" cy="510.2" r="2.6"/><circle cx="916.5" cy="445.7" r="2.6"/><circle cx="921.3" cy="625.5" r="2.6"/><circle cx="926.2" cy="548.5" r="2.6"/><circle cx="931.0" cy="604.2" r="2.6"/><circle cx="935.9" cy="445.1" r="2.6"/><circle cx="940.7" cy="601.4" r="2.6"/><circle cx="945.5" cy="634.6" r="2.6"/><circle cx="950.4" cy="562.2" r="2.6"/><circle cx="955.2" cy="485.8" r="2.6"/><circle cx="960.1" cy="455.7" r="2.6"/><circle cx="964.9" cy="445.7" r="2.6"/><circle cx="969.7" cy="560.4" r="2.6"/><circle cx="974.6" cy="521.2" r="2.6"/><circle cx="979.4" cy="571.3" r="2.6"/><circle cx="984.2" cy="634.0" r="2.6"/><circle cx="989.1" cy="664.4" r="2.6"/><circle cx="993.9" cy="441.9" r="2.6"/><circle cx="998.8" cy="443.8" r="2.6"/><circle cx="1003.6" cy="597.6" r="2.6"/><circle cx="1008.4" cy="532.2" r="2.6"/><circle cx="1013.3" cy="557.5" r="2.6"/><circle cx="1018.1" cy="615.2" r="2.6"/><circle cx="1023.0" cy="542.5" r="2.6"/><circle cx="1027.8" cy="644.3" r="2.6"/><circle cx="1032.6" cy="486.1" r="2.6"/><circle cx="1037.5" cy="466.4" r="2.6"/><circle cx="1042.3" cy="652.2" r="2.6"/><circle cx="1047.2" cy="437.8" r="2.6"/><circle cx="1052.0" cy="467.0" r="2.6"/><circle cx="1056.8" cy="515.9" r="2.6"/><circle cx="1061.7" cy="559.7" r="2.6"/><circle cx="1066.5" cy="609.9" r="2.6"/><circle cx="1071.3" cy="535.9" r="2.6"/><circle cx="1076.2" cy="610.5" r="2.6"/><circle cx="1081.0" cy="555.7" r="2.6"/><circle cx="1085.9" cy="447.2" r="2.6"/><circle cx="1090.7" cy="491.7" r="2.6"/><circle cx="1095.5" cy="509.9" r="2.6"/><circle cx="1100.4" cy="647.2" r="2.6"/><circle cx="1105.2" cy="453.5" r="2.6"/><circle cx="1110.1" cy="554.4" r="2.6"/><circle cx="1114.9" cy="632.4" r="2.6"/><circle cx="1119.7" cy="528.4" r="2.6"/><circle cx="1124.6" cy="596.7" r="2.6"/><circle cx="1129.4" cy="507.7" r="2.6"/><circle cx="1134.3" cy="588.2" r="2.6"/><circle cx="1139.1" cy="582.6" r="2.6"/><circle cx="1143.9" cy="557.5" r="2.6"/><circle cx="1148.8" cy="536.9" r="2.6"/><circle cx="1153.6" cy="536.5" r="2.6"/><circle cx="1158.5" cy="489.9" r="2.6"/><circle cx="1163.3" cy="603.3" r="2.6"/><circle cx="1168.1" cy="588.2" r="2.6"/><circle cx="1173.0" cy="636.8" r="2.6"/><circle cx="1177.8" cy="440.0" r="2.6"/><circle cx="1182.6" cy="599.8" r="2.6"/><circle cx="1187.5" cy="635.2" r="2.6"/><circle cx="1192.3" cy="631.8" r="2.6"/><circle cx="1197.2" cy="633.7" r="2.6"/><circle cx="1202.0" cy="447.6" r="2.6"/><circle cx="1206.8" cy="438.2" r="2.6"/><circle cx="1211.7" cy="574.5" r="2.6"/><circle cx="1216.5" cy="490.5" r="2.6"/><circle cx="1221.4" cy="585.7" r="2.6"/><circle cx="1226.2" cy="430.6" r="2.6"/><circle cx="1231.0" cy="657.5" r="2.6"/><circle cx="1235.9" cy="571.6" r="2.6"/><circle cx="1240.7" cy="460.1" r="2.6"/><circle cx="1245.6" cy="648.4" r="2.6"/><circle cx="1250.4" cy="512.1" r="2.6"/><circle cx="1255.2" cy="436.3" r="2.6"/><circle cx="1260.1" cy="596.7" r="2.6"/><circle cx="1264.9" cy="525.0" r="2.6"/><circle cx="1269.7" cy="637.1" r="2.6"/><circle cx="1274.6" cy="620.2" r="2.6"/><circle cx="1279.4" cy="623.3" r="2.6"/><circle cx="1284.3" cy="540.3" r="2.6"/><circle cx="1289.1" cy="528.1" r="2.6"/><circle cx="1293.9" cy="446.3" r="2.6"/><circle cx="1298.8" cy="445.7" r="2.6"/><circle cx="1303.6" cy="565.7" r="2.6"/><circle cx="1308.5" cy="543.1" r="2.6"/><circle cx="1313.3" cy="553.2" r="2.6"/><circle cx="1318.1" cy="561.9" r="2.6"/><circle cx="1323.0" cy="437.5" r="2.6"/><circle cx="1327.8" cy="654.7" r="2.6"/><circle cx="1332.7" cy="491.4" r="2.6"/><circle cx="1337.5" cy="624.9" r="2.6"/><circle cx="1342.3" cy="534.0" r="2.6"/><circle cx="1347.2" cy="439.4" r="2.6"/><circle cx="1352.0" cy="648.7" r="2.6"/><circle cx="1356.8" cy="500.5" r="2.6"/><circle cx="1361.7" cy="431.9" r="2.6"/><circle cx="1366.5" cy="557.2" r="2.6"/><circle cx="1371.4" cy="655.0" r="2.6"/><circle cx="1376.2" cy="461.7" r="2.6"/></g>
<line x1="624" x2="646" y1="173" y2="173" stroke="#3384b6" stroke-width="2"/>
<circle cx="635" cy="173" r="4.5" fill="#fff" stroke="#3384b6" stroke-width="2"/>
<text transform="translate(652,177) scale(0.975,1)" class="lg">kraft</text>
<line x1="680" x2="702" y1="173" y2="173" stroke="#f45246" stroke-width="2"/>
<circle cx="691" cy="173" r="4.5" fill="#fff" stroke="#f45246" stroke-width="2"/>
<text transform="translate(708,177) scale(0.975,1)" class="lg">temperaturMax</text>
<line x1="788" x2="810" y1="173" y2="173" stroke="#3bb4ee" stroke-width="2"/>
<circle cx="799" cy="173" r="4.5" fill="#fff" stroke="#3bb4ee" stroke-width="2"/>
<text transform="translate(815,177) scale(0.975,1)" class="lg">temperatur</text>
<line x1="875" x2="897" y1="173" y2="173" stroke="#f45246" stroke-width="2"/>
<circle cx="886" cy="173" r="4.5" fill="#fff" stroke="#f45246" stroke-width="2"/>
<text transform="translate(902,177) scale(0.975,1)" class="lg">kraftMax</text>
<line x1="952" x2="974" y1="173" y2="173" stroke="#f45246" stroke-width="2"/>
<circle cx="963" cy="173" r="4.5" fill="#fff" stroke="#f45246" stroke-width="2"/>
<text transform="translate(979,177) scale(0.975,1)" class="lg">kraftMin</text>
<line x1="1025" x2="1047" y1="173" y2="173" stroke="#f45246" stroke-width="2"/>
<circle cx="1036" cy="173" r="4.5" fill="#fff" stroke="#f45246" stroke-width="2"/>
<text transform="translate(1053,177) scale(0.975,1)" class="lg">temperaturMin</text>
</svg>

<div id="dp"><div class="t">Data preview</div><div class="r">390 rows</div>
<svg class="abs" style="left:1221.700px;top:9.700px" width="21" height="21" viewBox="0 0 24 24" fill="#231c4a"><path d="M12 8l-6 6 1.410 1.410L12 10.830l4.590 4.580L18 14z"/></svg></div>
<div id="dpl"></div><div id="below"></div>
<div id="topline"></div>
<svg class="abs" style="left:0;top:0;z-index:9;pointer-events:none" width="1512" height="782" viewBox="0 0 1512 782"><rect x="0" y="1" width="1" height="766" fill="#7a7496"/><path d="M0,766.500A24.200,24.200 0 0 0 5.600,782L0,782Z" fill="#101010"/><path d="M0.600,766.500A24.200,24.200 0 0 0 6.200,782" fill="none" stroke="#8a84a6" stroke-width="1"/><path d="M1512,759.700A51,51 0 0 1 1506.900,782L1512,782Z" fill="#101010"/><path d="M1511.400,759.700A51,51 0 0 1 1506.300,782" fill="none" stroke="#ffffff" stroke-width="1"/></svg>
</body></html>
